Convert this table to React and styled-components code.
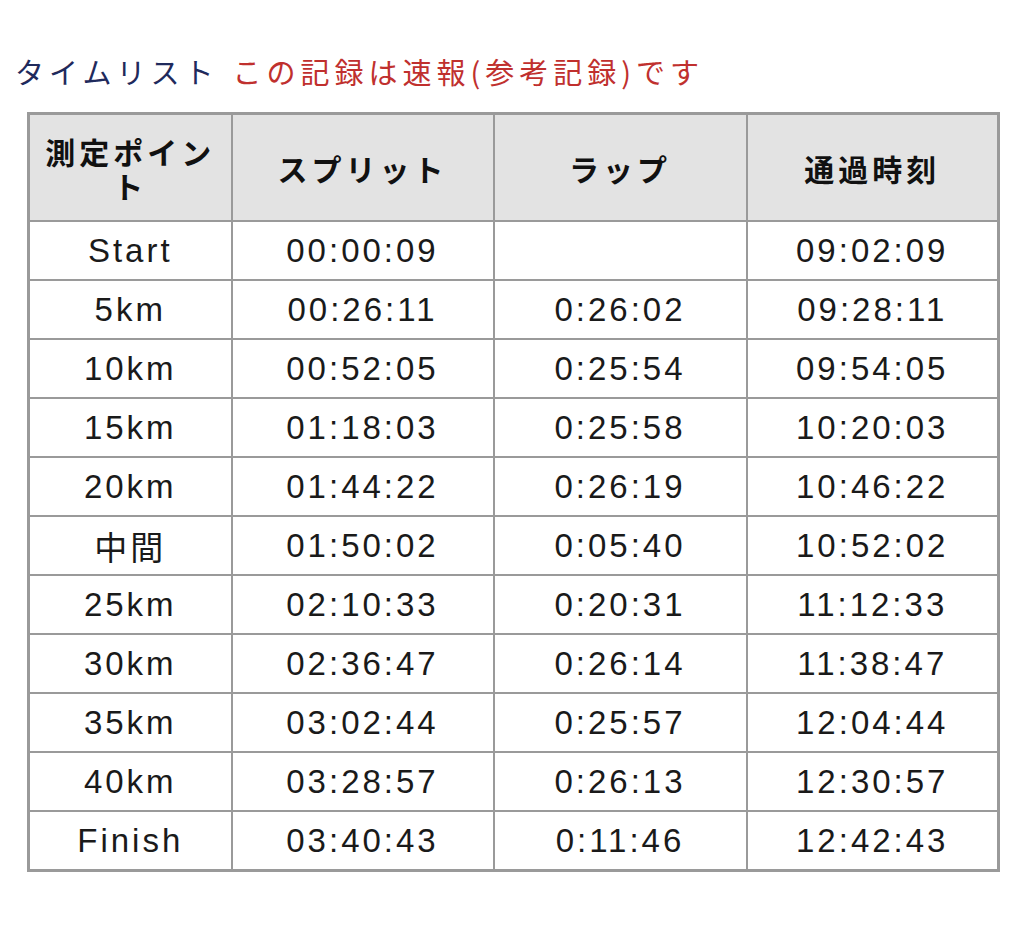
import React from 'react';
import styled, { createGlobalStyle } from 'styled-components';

const GlobalStyle = createGlobalStyle`
  body {
    margin: 0;
    background: #ffffff;
    font-family: "Liberation Sans", "Noto Sans CJK JP", sans-serif;
  }
`;

const Page = styled.div`
  padding: 50px 0 40px 0;
`;

const Title = styled.h2`
  margin: 0 0 20px 15px;
  font-family: "Noto Sans CJK JP", sans-serif;
  font-weight: 400;
  font-size: 29px;
  line-height: 42px;
  letter-spacing: 5px;
  color: #1f2a5c;
`;

const Notice = styled.span`
  margin-left: 14px;
  color: #c0302e;
`;

const Table = styled.table`
  margin-left: 27px;
  width: 970px;
  border-collapse: collapse;
  table-layout: fixed;
  border: 3px solid #9a9a9a;
`;

const HeadCell = styled.th`
  height: 105px;
  padding: 0 12px;
  background: #e3e3e3;
  border: 2px solid #9a9a9a;
  font-family: "Noto Sans CJK JP", sans-serif;
  font-weight: 700;
  font-size: 30px;
  line-height: 34px;
  letter-spacing: 4px;
  color: #111;
  text-align: center;
`;

const Cell = styled.td`
  height: 57px;
  padding: 0;
  border: 2px solid #9a9a9a;
  font-family: "Liberation Sans", "Noto Sans CJK JP", sans-serif;
  font-size: 33px;
  letter-spacing: 3px;
  color: #1a1a1a;
  text-align: center;
  vertical-align: middle;
`;

const rows = [
  ['Start', '00:00:09', '', '09:02:09'],
  ['5km', '00:26:11', '0:26:02', '09:28:11'],
  ['10km', '00:52:05', '0:25:54', '09:54:05'],
  ['15km', '01:18:03', '0:25:58', '10:20:03'],
  ['20km', '01:44:22', '0:26:19', '10:46:22'],
  ['中間', '01:50:02', '0:05:40', '10:52:02'],
  ['25km', '02:10:33', '0:20:31', '11:12:33'],
  ['30km', '02:36:47', '0:26:14', '11:38:47'],
  ['35km', '03:02:44', '0:25:57', '12:04:44'],
  ['40km', '03:28:57', '0:26:13', '12:30:57'],
  ['Finish', '03:40:43', '0:11:46', '12:42:43'],
];

export default function App() {
  return (
    <Page>
      <GlobalStyle />
      <Title>
        タイムリスト<Notice>この記録は速報(参考記録)です</Notice>
      </Title>
      <Table>
        <colgroup>
          <col style={{ width: 203 }} />
          <col style={{ width: 262 }} />
          <col style={{ width: 253 }} />
          <col style={{ width: 252 }} />
        </colgroup>
        <thead>
          <tr>
            <HeadCell>測定ポイント</HeadCell>
            <HeadCell>スプリット</HeadCell>
            <HeadCell>ラップ</HeadCell>
            <HeadCell>通過時刻</HeadCell>
          </tr>
        </thead>
        <tbody>
          {rows.map((r) => (
            <tr key={r[0]}>
              {r.map((v, i) => (
                <Cell key={i}>{v}</Cell>
              ))}
            </tr>
          ))}
        </tbody>
      </Table>
    </Page>
  );
}
